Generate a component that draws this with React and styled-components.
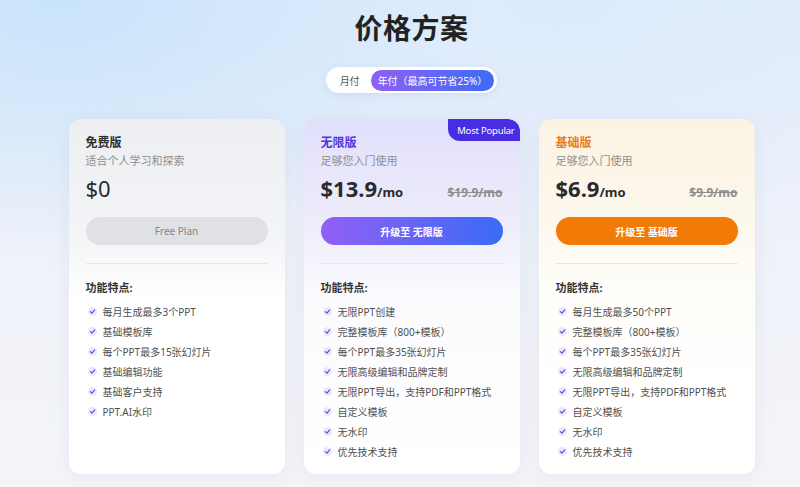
import React from "react";
import styled, { createGlobalStyle } from "styled-components";

const GlobalStyle = createGlobalStyle`
  html, body {
    margin: 0;
    padding: 0;
  }
  body {
    font-family: "Noto Sans", "Noto Sans CJK SC", sans-serif;
    background:
      radial-gradient(ellipse 420px 260px at 60px 0px, #c8e3fb 0%, rgba(200, 227, 251, 0) 100%),
      radial-gradient(ellipse 500px 260px at 560px 0px, #dcebfc 0%, rgba(220, 235, 252, 0) 100%),
      linear-gradient(180deg, #e6eefb 0%, #eef1fa 40%, #f4f5f8 100%);
    min-height: 100vh;
    overflow: hidden;
  }
`;

const Page = styled.div`
  display: flex;
  padding-left: 69px;
  height: 487px;
`;

const Main = styled.div`
  width: 685px;
  display: flex;
  flex-direction: column;
  align-items: center;
`;

const Title = styled.h1`
  margin: 10px 0 0;
  font-size: 28px;
  line-height: 36px;
  font-weight: 700;
  color: #222;
  letter-spacing: 0.5px;
`;

const Toggle = styled.div`
  margin-top: 21px;
  display: flex;
  align-items: center;
  height: 26px;
  padding: 0 3px 0 0;
  background: #fff;
  border-radius: 13px;
  box-shadow: 0 2px 8px rgba(90, 110, 160, 0.12);
`;

const ToggleItem = styled.div`
  display: flex;
  align-items: center;
  height: 21px;
  padding: ${(p) => (p.$active ? "0 7px" : "0 11px 0 14px")};
  border-radius: 11px;
  font-size: 10px;
  color: ${(p) => (p.$active ? "#fff" : "#555")};
  background: ${(p) =>
    p.$active ? "linear-gradient(90deg, #9060f5 0%, #3c6cf6 100%)" : "transparent"};
`;

const Cards = styled.div`
  margin-top: 26px;
  display: flex;
  gap: 19px;
`;

const Card = styled.div`
  position: relative;
  width: 216px;
  height: 355px;
  box-sizing: border-box;
  padding: 16px 17px 0;
  border-radius: 12px;
  background: ${(p) => p.$bg};
  box-shadow: 0 4px 18px rgba(120, 130, 170, 0.1);
  overflow: hidden;
`;

const Badge = styled.div`
  position: absolute;
  top: 0;
  right: 0;
  height: 22px;
  padding: 0 5px 0 9px;
  display: flex;
  align-items: center;
  background: #4a2de0;
  color: #fff;
  font-size: 9.5px;
  letter-spacing: -0.2px;
  border-radius: 0 12px 0 12px;
`;

const PlanName = styled.div`
  font-size: 12px;
  line-height: 16px;
  font-weight: 700;
  color: ${(p) => p.$color};
`;

const PlanDesc = styled.div`
  margin-top: 2px;
  font-size: 11px;
  line-height: 16px;
  color: #8f8f8f;
`;

const PriceRow = styled.div`
  margin-top: 5px;
  height: 28px;
  display: flex;
  align-items: baseline;
  justify-content: space-between;
`;

const Price = styled.div`
  font-size: 22px;
  line-height: 28px;
  font-weight: ${(p) => (p.$bold ? 700 : 400)};
  color: #2a2a2a;

  span {
    font-size: 13px;
    font-weight: 700;
  }
`;

const OldPrice = styled.div`
  font-size: 12px;
  font-weight: 700;
  color: #8d8d8d;
  text-decoration: line-through;
`;

const PlanButton = styled.div`
  margin-top: 15px;
  height: 28px;
  border-radius: 14px;
  display: flex;
  align-items: center;
  justify-content: center;
  font-size: 10px;
  font-weight: ${(p) => (p.$muted ? 400 : 700)};
  color: ${(p) => (p.$muted ? "#858585" : "#fff")};
  background: ${(p) => p.$bg};
`;

const Divider = styled.div`
  margin-top: 18px;
  height: 1px;
  background: #e6e7ea;
`;

const FeatureTitle = styled.div`
  margin-top: 16px;
  font-size: 11px;
  line-height: 16px;
  font-weight: 700;
  color: #333;
`;

const FeatureList = styled.ul`
  margin: 5px 0 0;
  padding: 0;
  list-style: none;
`;

const FeatureItem = styled.li`
  height: 20px;
  display: flex;
  align-items: center;
  gap: 6px;
  font-size: 10px;
  color: #505050;
`;

const CheckDot = styled.span`
  width: 9px;
  height: 9px;
  margin-left: 2px;
  border-radius: 50%;
  background: #ebe8fb;
  display: flex;
  align-items: center;
  justify-content: center;
  flex-shrink: 0;
`;

const Check = () => (
  <CheckDot>
    <svg width="7" height="7" viewBox="0 0 10 10">
      <path d="M2 5.2 L4.2 7.3 L8.2 2.8" fill="none" stroke="#6349de" strokeWidth="1.7" strokeLinecap="round" strokeLinejoin="round" />
    </svg>
  </CheckDot>
);

const fullFeatures = [
  "完整模板库（800+模板）",
  "每个PPT最多35张幻灯片",
  "无限高级编辑和品牌定制",
  "无限PPT导出，支持PDF和PPT格式",
  "自定义模板",
  "无水印",
  "优先技术支持",
];

const plans = [
  {
    name: "免费版",
    color: "#2e2e2e",
    desc: "适合个人学习和探索",
    price: "$0",
    button: "Free Plan",
    muted: true,
    buttonBg: "#e0e1e5",
    bg: "linear-gradient(180deg, #eceef1 0%, #f4f5f7 35%, #ffffff 50%, #ffffff 100%)",
    features: ["每月生成最多3个PPT", "基础模板库", "每个PPT最多15张幻灯片", "基础编辑功能", "基础客户支持", "PPT.AI水印"],
  },
  {
    name: "无限版",
    color: "#5436dc",
    desc: "足够您入门使用",
    price: "$13.9",
    old: "$19.9/mo",
    button: "升级至 无限版",
    buttonBg: "linear-gradient(90deg, #935ff5 0%, #3a6bf6 100%)",
    bg: "linear-gradient(180deg, #e1e0fb 0%, #eeedfb 30%, #fbfbfe 50%, #ffffff 100%)",
    badge: "Most Popular",
    features: ["无限PPT创建", ...fullFeatures],
  },
  {
    name: "基础版",
    color: "#f07a1a",
    desc: "足够您入门使用",
    price: "$6.9",
    old: "$9.9/mo",
    button: "升级至 基础版",
    buttonBg: "#f27a06",
    bg: "linear-gradient(180deg, #fbf3e2 0%, #fdf8ee 30%, #fffefb 50%, #ffffff 100%)",
    features: ["每月生成最多50个PPT", ...fullFeatures],
  },
];

const App = () => {
  return (
    <Page>
      <GlobalStyle />
      <Main>
        <Title>价格方案</Title>
        <Toggle>
          <ToggleItem>月付</ToggleItem>
          <ToggleItem $active>年付（最高可节省25%）</ToggleItem>
        </Toggle>
        <Cards>
          {plans.map((plan) => (
            <Card key={plan.name} $bg={plan.bg}>
              {plan.badge && <Badge>{plan.badge}</Badge>}
              <PlanName $color={plan.color}>{plan.name}</PlanName>
              <PlanDesc>{plan.desc}</PlanDesc>
              <PriceRow>
                {plan.old ? (
                  <Price $bold>
                    {plan.price}
                    <span>/mo</span>
                  </Price>
                ) : (
                  <Price>{plan.price}</Price>
                )}
                {plan.old && <OldPrice>{plan.old}</OldPrice>}
              </PriceRow>
              <PlanButton $bg={plan.buttonBg} $muted={plan.muted}>
                {plan.button}
              </PlanButton>
              <Divider />
              <FeatureTitle>功能特点:</FeatureTitle>
              <FeatureList>
                {plan.features.map((f) => (
                  <FeatureItem key={f}>
                    <Check />
                    {f}
                  </FeatureItem>
                ))}
              </FeatureList>
            </Card>
          ))}
        </Cards>
      </Main>
    </Page>
  );
};

export default App;
